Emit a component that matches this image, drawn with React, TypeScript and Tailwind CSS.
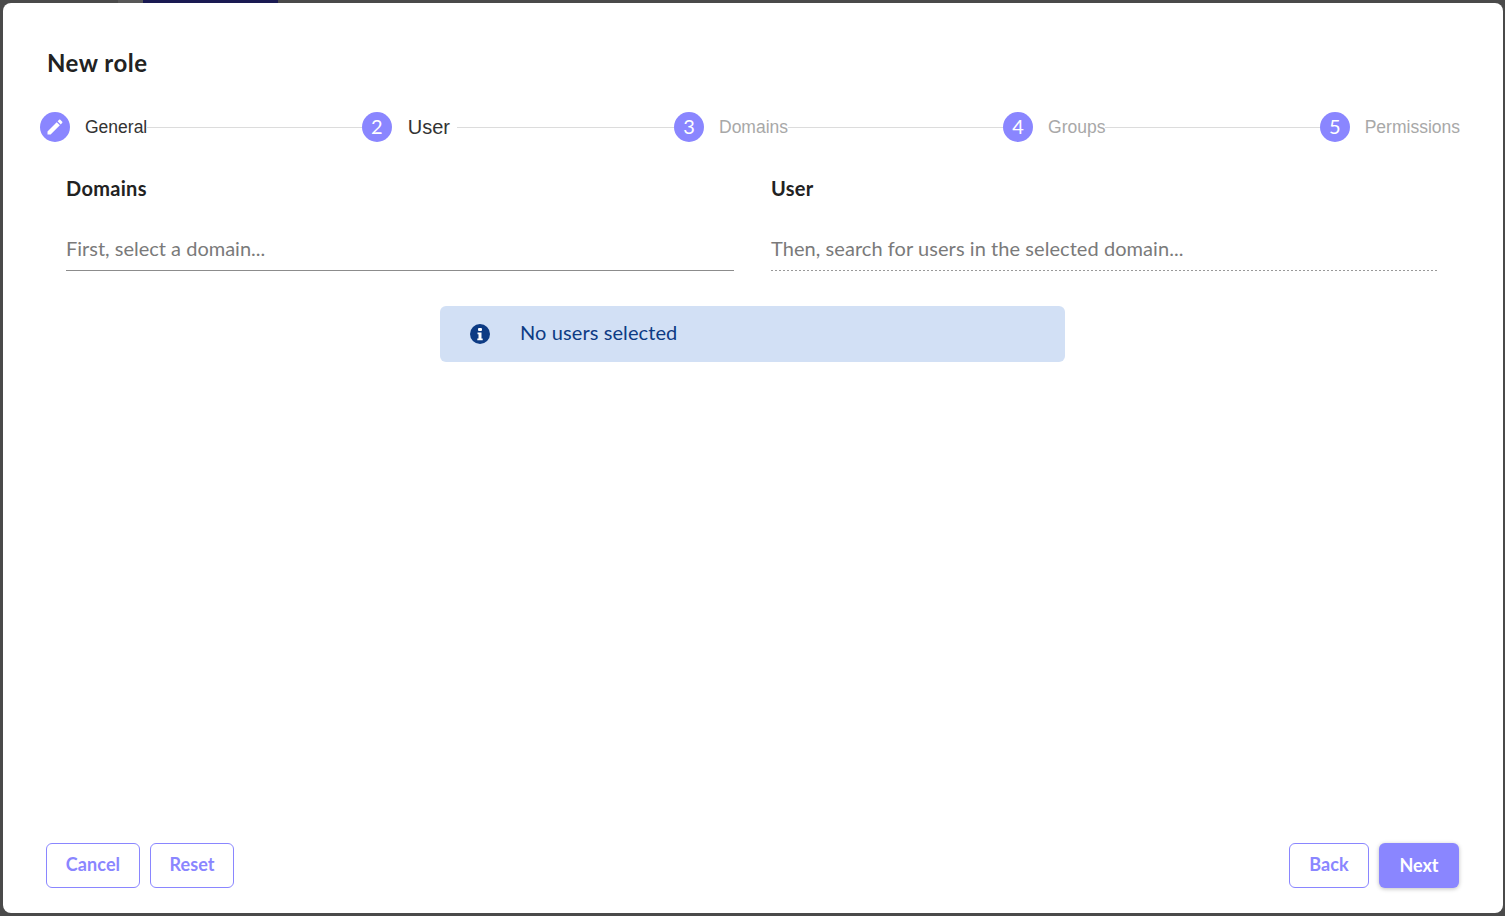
import type {ReactNode} from "react";

const btnOutline = "h-[45px] rounded-[6px] border border-[#8a86ff] bg-white pb-[3px] text-[18px] tracking-[0.1px] font-bold text-[#8a86ff] flex items-center justify-center";

function Step({n, label, active, large}: {n: ReactNode; label: string; active?: boolean; large?: boolean}) {
    return (
        <div className="flex items-center">
            <div className="flex h-[30px] w-[30px] shrink-0 items-center justify-center rounded-full bg-[#8a86ff] pb-[2px] text-[20px] leading-none text-white">
                {n}
            </div>
            <span
                className={
                    "font-['Liberation_Sans',sans-serif] " +
                    (large ? "ml-[16px] mr-[7px] text-[20px] text-[#333333]" : "ml-[15px] text-[17.5px] ") +
                    (active ? "text-[#333333]" : large ? "" : "text-[#a8a8a8]")
                }
            >
                {label}
            </span>
        </div>
    );
}

export default function App() {
    return (
        <div className="flex h-[916px] w-[1505px] flex-col overflow-hidden bg-[#4a4a4a] font-['Lato',sans-serif]">
            <div className="flex h-[3px] shrink-0">
                <div className="ml-[118px] w-[25px] bg-[#585858]" />
                <div className="w-[135px] bg-[#1a1a52]" />
            </div>
            <div className="mr-[2px] ml-[3px] flex h-[910px] flex-col rounded-[8px] bg-white">
                <h2 className="mt-[44px] ml-[44px] text-[24px] leading-[32px] tracking-[0.5px] font-bold text-[#222222]">New role</h2>

                <div className="mt-[33px] ml-[37px] mr-[43px] flex items-center">
                    <Step
                        n={
                            <svg width="20" height="20" viewBox="0 0 24 24" fill="white" className="mt-[2px]">
                                <path d="M3 17.25V21h3.75L17.81 9.94l-3.75-3.75L3 17.25zM20.71 7.04c.39-.39.39-1.02 0-1.41l-2.34-2.34c-.39-.39-1.02-.39-1.41 0l-1.83 1.83 3.75 3.75 1.83-1.83z" />
                            </svg>
                        }
                        label="General"
                        active
                    />
                    <div className="h-px w-[214.5px] bg-[#dcdcdc]" />
                    <Step n="2" label="User" large />
                    <div className="h-px w-[217px] bg-[#dcdcdc]" />
                    <Step n="3" label="Domains" />
                    <div className="h-px w-[215px] bg-[#dcdcdc]" />
                    <Step n="4" label="Groups" />
                    <div className="h-px flex-1 bg-[#dcdcdc]" />
                    <Step n="5" label="Permissions" />
                </div>

                <div className="mt-[34px] ml-[63px] mr-[64px] grid grid-cols-2 gap-x-[37px]">
                    <div>
                        <div className="text-[20px] leading-[24px] tracking-[0.3px] font-bold text-[#222222]">Domains</div>
                        <div className="mt-[25px] h-[46px] border-b border-[#8c8c8c] pt-[10px] text-[20px] leading-[26px] text-[#7a7a7a]">
                            First, select a domain...
                        </div>
                    </div>
                    <div>
                        <div className="text-[20px] leading-[24px] tracking-[0.3px] font-bold text-[#222222]">User</div>
                        <div className="mt-[25px] h-[45px] pt-[10px] text-[20px] leading-[26px] tracking-[0.06px] text-[#7a7a7a]">
                            Then, search for users in the selected domain...
                        </div>
                        <div className="h-px bg-[repeating-linear-gradient(90deg,#999999_0,#999999_2px,transparent_2px,transparent_4px)]" />
                    </div>
                </div>

                <div className="mt-[35px] ml-[437px] flex h-[56px] w-[625px] items-center rounded-[6px] bg-[#d2e0f5] pl-[30px]">
                    <svg width="20" height="20" viewBox="0 0 20 20">
                        <circle cx="10" cy="10" r="10" fill="#0d3b84" />
                        <rect x="8" y="4" width="4" height="3" rx="1" fill="white" />
                        <path d="M7.5 8.5h4v6h1.2v1.7H7.3v-1.7h1.2v-4.3h-1z" fill="white" />
                    </svg>
                    <span className="ml-[30px] pb-[4px] text-[20px] tracking-[0.1px] text-[#0d3b84]">No users selected</span>
                </div>

                <div className="mt-auto mb-[25px] ml-[43px] mr-[44px] flex items-center gap-[10px]">
                    <button className={btnOutline + " w-[94px]"}>Cancel</button>
                    <button className={btnOutline + " w-[84px]"}>Reset</button>
                    <button className={btnOutline + " ml-auto w-[80px]"}>Back</button>
                    <button className="flex h-[45px] w-[80px] items-center justify-center rounded-[6px] bg-[#8a86ff] pb-[1px] text-[18px] font-bold text-white shadow-[0_1px_4px_rgba(0,0,0,0.25)]">
                        Next
                    </button>
                </div>
            </div>
        </div>
    );
}
